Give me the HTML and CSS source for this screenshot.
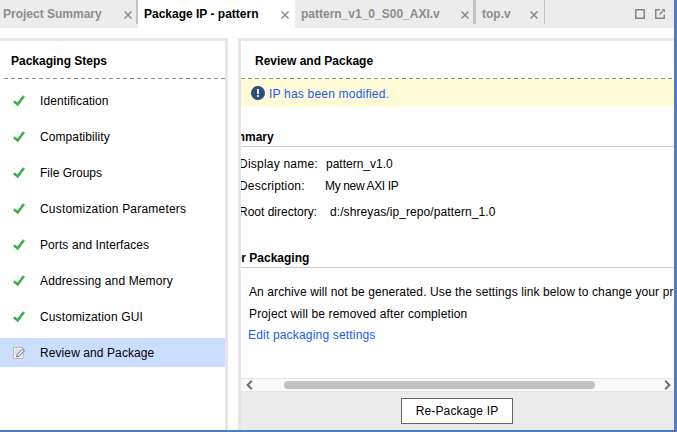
FILE: index.html
```html
<!DOCTYPE html>
<html lang="en">
<head>
<meta charset="utf-8">
<title>Package IP - pattern</title>
<link rel="stylesheet" href="styles.css">
</head>
<body>
<svg class="defs" width="0" height="0">
  <symbol id="check" viewBox="0 0 12 12"><path d="M.8 6.200 4.700 9.400 11 1" fill="none" stroke="#3fae49" stroke-width="2.6"/></symbol>
  <symbol id="close" viewBox="0 0 8 8"><path d="M.5.5l7 7M7.5.5l-7 7" fill="none" stroke="#8a8a8a" stroke-width="1.5"/></symbol>
</svg>
<div class="window">
  <nav class="tabs">
    <div class="tab tab-summary"><span class="label">Project Summary</span><svg class="close"><use href="#close"/></svg></div>
    <div class="tab tab-package active"><span class="label">Package IP - pattern</span><svg class="close"><use href="#close"/></svg></div>
    <div class="tab tab-axi"><span class="label">pattern_v1_0_S00_AXI.v</span><svg class="close"><use href="#close"/></svg></div>
    <div class="tab tab-top"><span class="label">top.v</span><svg class="close"><use href="#close"/></svg></div>
    <div class="tools">
      <svg width="10" height="10" viewBox="0 0 10 10"><path d="M.75.75h8.5v8.5H.75z" fill="none" stroke="#858585" stroke-width="1.5"/></svg>
      <svg width="10" height="10" viewBox="0 0 10 10"><path d="M5 .75H.75v8.5h8.5V5.500" fill="none" stroke="#858585" stroke-width="1.5"/><path d="M4.500 5.500 8 2" stroke="#858585" stroke-width="1.5"/><path d="M6.500 0H10v3.500z" fill="#858585"/></svg>
    </div>
  </nav>
  <main class="panes">
    <section class="steps">
      <h2>Packaging Steps</h2>
      <div class="dash"></div>
      <ul>
        <li><svg class="mark"><use href="#check"/></svg><span class="snug">Identification</span></li>
        <li><svg class="mark"><use href="#check"/></svg><span class="snug">Compatibility</span></li>
        <li><svg class="mark"><use href="#check"/></svg><span class="tight">File Groups</span></li>
        <li><svg class="mark"><use href="#check"/></svg><span class="wide">Customization Parameters</span></li>
        <li><svg class="mark"><use href="#check"/></svg><span class="snug">Ports and Interfaces</span></li>
        <li><svg class="mark"><use href="#check"/></svg><span>Addressing and Memory</span></li>
        <li><svg class="mark"><use href="#check"/></svg><span>Customization GUI</span></li>
        <li class="selected"><svg class="mark" viewBox="0 0 12 12"><path d="M.5.5h9.500v11H.5z" fill="#f5f5f5" stroke="#b5b5b5"/><path d="M2 3h5M2 5h4M2 7h2" stroke="#c4c4c4"/><path d="M3.500 10l.8-2.700L9.500 2l1.900 1.900-5.300 5.300z" fill="#e4ebf5" stroke="#607189"/></svg><span class="snug">Review and Package</span></li>
      </ul>
    </section>
    <section class="review">
      <h2>Review and Package</h2>
      <div class="dash"></div>
      <div class="notice"><svg width="14" height="14" viewBox="0 0 14 14"><circle cx="7" cy="7" r="7" fill="#2f4b80"/><path d="M6 3h2v5H6zM6 9h2v2H6z" fill="#e8ecf3"/></svg><a>IP has been modified.</a></div>
      <div class="content">
        <h3 class="summary-title"><span>Summary</span></h3>
        <div class="field name"><span class="key">Display name:</span><span class="value">pattern_v1.0</span></div>
        <div class="field desc"><span class="key">Description:</span><span class="value">My new AXI IP</span></div>
        <div class="field root"><span class="key">Root directory:</span><span class="value">d:/shreyas/ip_repo/pattern_1.0</span></div>
        <h3 class="after-title"><span>After Packaging</span></h3>
        <p class="archive">An archive will not be generated. Use the settings link below to change your preferences</p>
        <p class="removed">Project will be removed after completion</p>
        <a class="edit">Edit packaging settings</a>
      </div>
      <div class="scrollbar">
        <svg width="7" height="10" viewBox="0 0 7 10"><path d="M5.800.8 1.600 5l4.200 4.200" fill="none" stroke="#6e6e6e" stroke-width="2"/></svg>
        <div class="thumb"></div>
        <svg width="7" height="10" viewBox="0 0 7 10"><path d="M1.200.8 5.400 5 1.200 9.200" fill="none" stroke="#6e6e6e" stroke-width="2"/></svg>
      </div>
      <footer><button>Re-Package IP</button></footer>
    </section>
  </main>
</div>
</body>
</html>
```
FILE: styles.css
```css
* { box-sizing: border-box; }
body { margin: 0; font: 12px/14px "Liberation Sans", Arial, sans-serif; color: #000; overflow: hidden; }
.defs { display: none; }
h2, h3, p, ul { margin: 0; padding: 0; font-size: 12px; }
a { color: #1a5cf0; }
.window { width: 677px; height: 432px; border: solid #4a7dcb; border-width: 0 3px 2px 0; display: flex; flex-direction: column; background: #fff; }
.tabs { display: flex; height: 28px; background: #ececec; }
.tab { position: relative; display: flex; justify-content: space-between; align-items: flex-start; padding: 7px 5px 0 6px; color: #8c8c8c; font-weight: bold; white-space: nowrap; }
.tab::after { content: ""; position: absolute; right: 0; top: 0; width: 2px; height: 24px; background: #c2c2c2; }
.tab.active { background: #fff; color: #000; }
.tab.active::after { display: none; }
.tab-summary { width: 138px; padding-left: 3px; padding-right: 6px; }
.tab-package { width: 157px; padding-right: 6px; }
.tab-axi { width: 181px; padding-right: 7px; }
.tab-axi::after { width: 3px; }
.tab-top { width: 69px; padding-right: 7px; }
.tab-top::after { width: 1px; }
.close { width: 8px; height: 8px; margin-top: 4px; }
.tools { display: flex; gap: 10px; margin: 9px 9px 0 auto; }
.panes { flex: 1; display: flex; gap: 10px; margin-top: 10px; min-height: 0; }
.steps { width: 228px; border: solid #e6e6e6; border-width: 3px 3px 0 0; }
.review { flex: 1; min-width: 0; border: solid #e6e6e6; border-width: 3px 0 0 3px; display: flex; flex-direction: column; }
h2 { height: 37px; padding: 13px 0 0 11px; }
.review h2 { padding-left: 14px; }
.dash { height: 1px; background: repeating-linear-gradient(90deg, #8c8c8c 0 4px, transparent 4px 7px); }
.steps .dash { margin-left: 4px; }
.steps ul { list-style: none; padding-top: 7px; }
.steps li { display: flex; align-items: center; height: 29px; margin-bottom: 7px; padding-left: 13px; gap: 15px; letter-spacing: 0.13px; }
.steps .snug { letter-spacing: 0.09px; }
.steps .tight { letter-spacing: 0; }
.steps .wide { letter-spacing: 0.2px; }
.steps li.selected { background: #ccdeff; }
.mark { width: 12px; height: 12px; flex: none; }
.notice { display: flex; align-items: center; gap: 4px; height: 28px; padding-left: 10px; background: #fffbd6; letter-spacing: 0.2px; }
.notice a { padding-top: 1px; }
.content { height: 271px; overflow: hidden; white-space: nowrap; }
h3 { display: flex; border-bottom: 1px solid #cbcbcb; }
.summary-title { height: 40px; padding-top: 23px; }
.summary-title span { margin-left: -22px; }
.field { display: flex; height: 22px; }
.key { width: 88px; margin-left: -2px; }
.name { margin-top: 10px; }
.name .key { letter-spacing: 0.22px; width: 87px; }
.desc .key { letter-spacing: 0.2px; width: 86px; }
.desc .value { letter-spacing: -0.35px; }
.root { margin-top: 4px; }
.root .key { width: 91px; }
.root .value { letter-spacing: 0.09px; }
.after-title { height: 39px; padding-top: 22px; margin-top: 2px; }
.after-title span { margin-left: -23px; }
.archive { margin: 17px 0 8px 8px; letter-spacing: 0.105px; }
.removed { margin: 0 0 7px 8px; letter-spacing: 0.14px; }
.edit { display: block; margin-left: 7px; letter-spacing: 0.18px; }
.scrollbar { height: 14px; flex: none; border: solid #e4e4e4; border-width: 1px 0; background: #fafafa; display: flex; align-items: center; padding: 0 3px 0 5px; }
.thumb { width: 311px; height: 8px; border-radius: 4px; background: #c1c1c1; margin: 0 auto 0 31px; }
footer { flex: 1; background: #ececec; display: flex; justify-content: flex-start; padding: 6px 0 0 160px; }
button { width: 112px; height: 26px; padding: 0; background: #fff; border: 1px solid #666; font: inherit; color: #000; letter-spacing: 0.15px; }
```
